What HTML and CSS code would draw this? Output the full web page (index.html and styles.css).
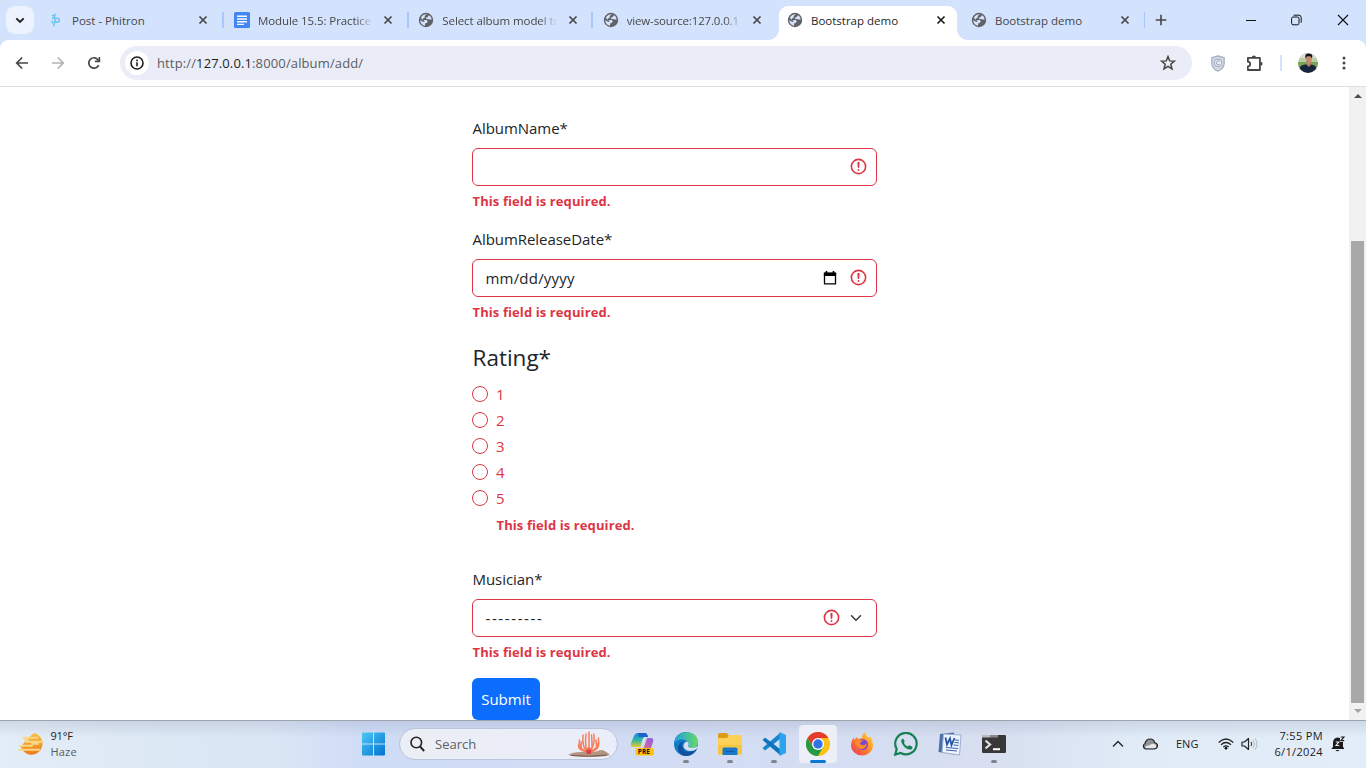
FILE: index.html
```html
<!DOCTYPE html>
<html lang="en">
<head>
<meta charset="utf-8">
<title>Bootstrap demo</title>
<link rel="stylesheet" href="styles.css">
</head>
<body>
<svg width="0" height="0" class="defs">
  <defs>
    <symbol id="globe" viewBox="0 0 16 16"><circle cx="8" cy="8" r="7.2" fill="#5f6368"/><path d="M9 2.3 6.6 4 6.9 5.4 5 6.5 5 8 8.6 8.1 9.8 9.3 8.7 11 7.2 11.2 7 13.7Q2.3 12.8 2.3 8L4.8 9.8 6.3 10 6.4 8.8 3.6 6.8 3 5.3Q5 2.1 9 2.3Z" fill="#d8e4fb"/><path d="M9.5 2.5 10.9 3.2 9.5 5.2 8 5.6 8.3 7 11 7.3 13.6 7.7Q13.5 4 9.5 2.5Z" fill="#d8e4fb"/></symbol>
    <symbol id="close" viewBox="0 0 10 10"><path d="M1.5 1.5 8.5 8.5M8.5 1.5 1.5 8.5" stroke="currentColor" stroke-width="1.7"/></symbol>
    <symbol id="invalid" viewBox="0 0 12 12"><circle cx="6" cy="6" r="4.5" fill="none" stroke="#dc3545"/><path d="M5.8 3.6h.4L6 6.5z" fill="#dc3545" stroke="#dc3545" stroke-linejoin="round"/><circle cx="6" cy="8.2" r=".6" fill="#dc3545"/></symbol>
  </defs>
</svg>

<header class="tabstrip">
  <button class="tab-search"><svg width="10" height="7" viewBox="0 0 10 7"><path d="M1.3 1.3 5 5 8.7 1.3" fill="none" stroke="#1f1f1f" stroke-width="1.9"/></svg></button>
  <div class="tab first">
    <svg class="favicon" viewBox="0 0 16 16"><path d="M3.8 3.6h3.6M7.4 1.8 5.8 6.6M4 6.3h5.5c2.4 0 2.4 3.8 0 3.8H6.3M7.5 7 5.6 14.4M4.4 8.4v3.2" fill="none" stroke="#6cc5ee" stroke-width="1.5"/></svg>
    <span class="title">Post - Phitron</span><svg class="x"><use href="#close"/></svg>
  </div>
  <div class="tab sep">
    <svg class="favicon" viewBox="0 0 16 16"><rect width="16" height="16" rx="1.5" fill="#4285f4"/><path d="M3 4.2h10M3 7h10M3 9.8h10M3 12.4h7" stroke="#fff" stroke-width="1.4"/></svg>
    <span class="title fade">Module 15.5: Practice</span><svg class="x"><use href="#close"/></svg>
  </div>
  <div class="tab sep"><svg class="favicon"><use href="#globe"/></svg><span class="title fade">Select album model to</span><svg class="x"><use href="#close"/></svg></div>
  <div class="tab sep"><svg class="favicon"><use href="#globe"/></svg><span class="title fade source">view-source:127.0.0.1</span><svg class="x"><use href="#close"/></svg></div>
  <div class="tab active"><svg class="favicon"><use href="#globe"/></svg><span class="title">Bootstrap demo</span><svg class="x"><use href="#close"/></svg></div>
  <div class="tab"><svg class="favicon"><use href="#globe"/></svg><span class="title">Bootstrap demo</span><svg class="x"><use href="#close"/></svg></div>
  <div class="newtab"><svg width="12" height="12" viewBox="0 0 12 12"><path d="M6 .7v10.6M.7 6h10.6" stroke="#444746" stroke-width="1.6"/></svg></div>
  <div class="window-controls">
    <svg width="10" height="12" viewBox="0 0 10 12"><path d="M0 6.5h10" stroke="#111"/></svg>
    <svg width="11" height="12" viewBox="0 0 11 12"><rect x=".6" y="3" width="7.4" height="7.8" rx="1.5" fill="none" stroke="#111"/><path d="M2.6 1.2h5.2q2.4 0 2.4 2.4v5" fill="none" stroke="#111"/></svg>
    <svg width="12" height="12" viewBox="0 0 12 12"><path d="m1 1 10 10M11 1 1 11" stroke="#111" stroke-width="1.1"/></svg>
  </div>
</header>

<nav class="toolbar">
  <svg width="14" height="14" viewBox="0 0 14 14"><path d="M13 7H2M7.2 1.5 1.7 7l5.5 5.5" fill="none" stroke="#444746" stroke-width="1.7"/></svg>
  <svg width="14" height="14" viewBox="0 0 14 14"><path d="M1 7h11M6.8 1.5 12.3 7l-5.5 5.5" fill="none" stroke="#b0b2b4" stroke-width="1.7"/></svg>
  <svg width="14" height="14" viewBox="0 0 14 14"><path d="M11.7 9.2A5.2 5.2 0 1 1 11.2 3.9L12 5" fill="none" stroke="#444746" stroke-width="1.7"/><path d="M12.4.9V5.4H7.9" fill="none" stroke="#444746" stroke-width="1.6"/></svg>
  <div class="omnibox">
    <span class="info"><svg width="14" height="14" viewBox="0 0 14 14"><circle cx="7" cy="7" r="6" fill="none" stroke="#1f1f1f" stroke-width="1.6"/><path d="M7 6.2v4.1M7 3.6v1.6" stroke="#1f1f1f" stroke-width="1.6"/></svg></span>
    <span class="url">http://<b>127.0.0.1</b>:8000/album/add/</span>
    <svg width="16" height="16" viewBox="0 0 16 16"><path d="m8 1.6 1.7 4.3 4.7.3-3.6 3 1.2 4.6L8 11.3l-4 2.5 1.2-4.6-3.6-3 4.7-.3Z" fill="none" stroke="#444746" stroke-width="1.5"/></svg>
  </div>
  <svg class="shield" width="14" height="17" viewBox="0 0 14 17"><path d="M7 .8 13.2 2.6V8c0 4.2-3 6.8-6.2 8.2C3.8 14.8.8 12.2.8 8V2.6Z" fill="#d4d9e5" stroke="#a4adc1" stroke-width="1.2"/><circle cx="7" cy="7.8" r="3.8" fill="#e9ecf2" stroke="#9fa9c0"/><path d="M8.6 6.3a2 2 0 1 0 0 3" fill="none" stroke="#98a3bc"/></svg>
  <svg class="puzzle" width="17" height="17" viewBox="0 0 17 17"><path d="M1.9 2.9H13.9V15H1.9V11.5C4.9 11.5 4.9 6.7 1.9 6.7Z" fill="none" stroke="#444746" stroke-width="1.8" stroke-linejoin="round"/><path d="M5.8 2.6a2.1 2.1 0 0 1 4.2 0ZM14.5 6.7a2.1 2.1 0 0 1 0 4.2Z" fill="#444746"/></svg>
  <i class="divider"></i>
  <svg class="avatar" width="20" height="20" viewBox="0 0 20 20"><clipPath id="av"><circle cx="10" cy="10" r="10"/></clipPath><g clip-path="url(#av)"><path fill="#b9cda4" d="M0 0h20v20H0z"/><path fill="#ddd9d0" d="M0 0h20v5H0z"/><path fill="#78a255" d="M0 9h20v5H0z"/><path fill="#17263b" d="M1 20v-4q1-4 6-4.5h6q5 .5 6 4.5v4z"/><path fill="#b98168" d="M8.8 9h4v3l-2 2-2-2z"/><ellipse cx="10.8" cy="6.5" rx="2.9" ry="4.3" fill="#c28b6e"/><path fill="#141414" d="M7.6 5.5C6.5 1 9 .2 11.5.6s3.5 2 2.4 4.9L12.5 3.2 9 3.3Z"/></g></svg>
  <svg class="menu" width="4" height="14" viewBox="0 0 4 14" fill="#444746"><circle cx="2" cy="2" r="1.5"/><circle cx="2" cy="7" r="1.5"/><circle cx="2" cy="12" r="1.5"/></svg>
</nav>

<div class="viewport">
  <main class="page">
    <form class="album-form">
      <div class="field">
        <label>AlbumName*</label>
        <div class="control"><svg class="invalid"><use href="#invalid"/></svg></div>
        <p class="error">This field is required.</p>
      </div>
      <div class="field">
        <label>AlbumReleaseDate*</label>
        <div class="control"><span class="date">mm/dd/yyyy</span>
          <svg class="calendar" viewBox="0 0 14 14"><path d="M1.5 2.5h11v10.3h-11z" fill="none" stroke="#000" stroke-width="1.3"/><path d="M.9 1.6h12.2V5H.9zM2.7 0h1.6v2H2.7zM9.7 0h1.6v2H9.7z"/></svg>
          <svg class="invalid"><use href="#invalid"/></svg></div>
        <p class="error">This field is required.</p>
      </div>
      <fieldset class="field rating">
        <div class="legend">Rating*</div>
        <div class="check"><i></i><span>1</span></div>
        <div class="check"><i></i><span>2</span></div>
        <div class="check"><i></i><span>3</span></div>
        <div class="check"><i></i><span>4</span></div>
        <div class="check"><i></i><span>5</span></div>
        <p class="error">This field is required.</p>
      </fieldset>
      <div class="field">
        <label>Musician*</label>
        <div class="control"><span class="dashes">---------</span><svg class="invalid"><use href="#invalid"/></svg>
          <svg class="chevron" viewBox="0 0 16 16"><path d="m2 5 6 6 6-6" fill="none" stroke="#343a40" stroke-width="2" stroke-linecap="round" stroke-linejoin="round"/></svg></div>
        <p class="error">This field is required.</p>
      </div>
      <button type="button" class="submit">Submit</button>
    </form>
  </main>
  <aside class="scrollbar"><i class="up"></i><i class="thumb"></i><i class="down"></i></aside>
</div>

<footer class="taskbar">
  <div class="weather">
    <svg width="26" height="24" viewBox="0 0 26 24"><defs><linearGradient id="sun" x2="0" y2="1"><stop stop-color="#f9bd3d"/><stop offset="1" stop-color="#ed7d1c"/></linearGradient></defs><path d="M16 1a11 11 0 1 1-13 14L9 7Z" fill="url(#sun)"/><path d="M5.5 5.7h14M8 9.7h16M2 13.7h12M1 17.7h20M7 7.7h3M14 11.7h6" stroke="#f6d887" stroke-width="2" stroke-linecap="round"/></svg>
    <div><div class="temp">91°F</div><div class="haze">Haze</div></div>
  </div>
  <div class="apps">
    <svg class="start" width="24" height="24" viewBox="0 0 24 24"><defs><linearGradient id="win" x2="1" y2="1"><stop stop-color="#4cc9f5"/><stop offset="1" stop-color="#0072d2"/></linearGradient></defs><path fill="url(#win)" d="M1 1.5Q1 .5 2 .5H12V11.5H1ZM13 .5H23Q24 .5 24 1.5V11.5H13ZM1 12.5H12V23.5H2Q1 23.5 1 22.5ZM13 12.5H24V22.5Q24 23.5 23 23.5H13Z"/></svg>
    <div class="search">
      <svg width="15" height="16" viewBox="0 0 15 16"><circle cx="6.3" cy="6.5" r="5.3" fill="none" stroke="#222" stroke-width="1.6"/><path d="m10 10.5 4.2 4.5" stroke="#222" stroke-width="1.9"/></svg>
      <span>Search</span>
      <svg class="coral" width="42" height="26" viewBox="0 0 42 26"><g fill="none" stroke="#f8805c" stroke-width="1.5" stroke-linecap="round"><path d="M21 22V1M20 21Q14 18 15 4M22 20Q27 15 26 3M20 21Q10 19 11.5 9M22 21Q32 17 30.5 7M18 18Q17 10 18 3M24 18Q24 9 23.5 4M19 21Q10 19 10.5 14M23 21Q31 19 31 12M13 17 13.5 11M28.5 16 28 9"/></g><path d="M17.5 20q3.5-8 7 0v3h-7Z" fill="#f06c54"/><path d="M0 24q5-3.5 16-3t15-1.5 11 4.5q-7 2-20 2T0 24Z" fill="#b69583"/><path d="M3 24.5q20 1.5 36-.5" stroke="#76584e" fill="none"/><path d="M18.5 19h4.5v4h-4.5z" fill="#df3f48"/></svg>
    </div>
    <div class="app"><svg width="24" height="24" viewBox="0 0 24 24"><defs><linearGradient id="cp" x2="0" y2="1"><stop stop-color="#1988e4"/><stop offset=".5" stop-color="#2cb6a4"/><stop offset="1" stop-color="#e9cb2e"/></linearGradient><linearGradient id="cp2" x1="1" x2="0" y2="1"><stop stop-color="#8d60e8"/><stop offset="1" stop-color="#f46778"/></linearGradient></defs><path d="M8 1h7q2 0 3 4h-3q-2 0-3 4L10.5 15H3q-3 0-2-4L4 4Q5 1 8 1Z" fill="url(#cp)"/><path d="M17 6h4q3 0 2 4l-2 6q-1 3-4 3h-6q2-1 3-4Z" fill="url(#cp2)"/><path d="M8 1h7q2 0 3 4H9Z" fill="#1764c8"/><rect x="5.5" y="16" width="18.5" height="7.5" rx="2" fill="#ffc20e"/><text x="7.8" y="22.3" class="pre">PRE</text></svg></div>
    <div class="app run"><svg width="24" height="24" viewBox="0 0 24 24"><defs><linearGradient id="eg" x2="1"><stop stop-color="#239ce4"/><stop offset="1" stop-color="#67da65"/></linearGradient></defs><circle cx="12" cy="12" r="12" fill="#107ac9"/><path d="M0 11Q2 0 12.5 0 24 1 24 10q0 6-6 6-4 0-4-2 2-2 0-4Q8 4 0 11Z" fill="url(#eg)"/><path d="M8 13q0 7 7 7 4 0 8-3-4 7-11 7-7-1-8-7 0-5 5-8-1 2-1 4Z" fill="#124f9e"/><path d="M13 9.5q-4 1-3.5 5.5 2 4 7 4 4 0 6.5-2.5l1-2.5q-3 2-6 2-4 0-4-2.5 2-2-1-4Z" fill="#d7dff2"/></svg></div>
    <div class="app run"><svg width="24" height="24" viewBox="0 0 24 24"><path d="M0 3q0-2 2-2h7l2 3v5H0Z" fill="#dc9c13"/><path d="M0 6h9l2-3h13v19q0 1-1 1H1q-1 0-1-1Z" fill="#fbd158"/><path d="M0 13h24v9H0Z" fill="#f8c541"/><path d="M4.5 23v-6q0-1.5 1.5-1.5h12q1.5 0 1.5 1.5v6Z" fill="#1878ca"/><path d="M8 19.5h8" stroke="#0e5da5"/></svg></div>
    <div class="app run"><svg width="24" height="24" viewBox="0 0 24 24"><path d="M18 1 .5 16 3 18.5 18 7Z" fill="#1585cf"/><path d="M.5 8 3 5.5 18 17v6Z" fill="#0d75bd"/><path d="m17.5 0 6.5 3v18l-6.5 3Z" fill="#2ca3ed"/></svg></div>
    <div class="app run current"><svg width="24" height="24" viewBox="0 0 24 24"><circle cx="12" cy="12" r="12" fill="#fbc116"/><path d="M1.6 6a12 12 0 0 1 20.8 0H12L7 15Z" fill="#e33b2e"/><path d="M1.6 6A12 12 0 0 0 12 24l5.2-9L7 15Z" fill="#249a49"/><circle cx="12" cy="12" r="6" fill="#fff"/><circle cx="12" cy="12" r="4.7" fill="#2e74e6"/></svg></div>
    <div class="app"><svg width="24" height="24" viewBox="0 0 24 24"><defs><linearGradient id="ff" x1="1" x2="0" y2="1"><stop stop-color="#ffe33d"/><stop offset=".5" stop-color="#ff8425"/><stop offset="1" stop-color="#f12e65"/></linearGradient></defs><path d="M15 0q1 4 4 6l1-2q3 4 3 9a11 10.5 0 0 1-22 0q0-4 3-8v3l3-3 1 2q2-1 4-1 0-4 3-6Z" fill="url(#ff)"/><circle cx="12.5" cy="12.5" r="5.5" fill="#8247cf"/><path d="M5 9q5-2 9 0-4 0-4 3 4 3 7-1-1 7-7 6-4-2-5-8Z" fill="#ff8928"/></svg></div>
    <div class="app"><svg width="26" height="24" viewBox="0 0 26 24"><path d="M3.7 17A10.7 10.7 0 1 1 7.8 21L2.2 22.6Z" fill="none" stroke="#168052" stroke-width="2.2"/><path d="M10 6.5q-3 1-1 5 3 6 8.5 6 3-.5 1.5-3l-2.7-1.3-1.6 1.3q-3-1-3.8-3.7L11.8 9.2Z" fill="#168052"/></svg></div>
    <div class="app"><svg width="24" height="24" viewBox="0 0 24 24"><path d="M2 2 16 .5v22L.5 20Z" fill="#4a70ab"/><path d="m5.5 2 17.5 1-1.5 20-17.5-2.5Z" fill="#eef4ff" stroke="#9faed0"/><path d="m7.5 5.5 1.5 7 3-6 1.5 6.5 3-7" fill="none" stroke="#2454a5" stroke-width="1.8"/><path d="m17 8 4 .3M16.5 10.5l4.5.3M15.5 13l5 .4M8 15.5l12 1M8 18l11 1" stroke="#3a63a9"/></svg></div>
    <div class="app run"><svg width="24" height="20" viewBox="0 0 24 20"><rect y="1" width="24" height="18" rx="1.2" fill="#383838"/><path d="M0 3.5V2q0-1 1-1h7v2.5Z" fill="#bbb"/><path d="M8 1h8v2.5H8Z" fill="#888"/><path d="m3.5 6.5 4.5 4-4.5 4" fill="none" stroke="#ddd" stroke-width="2.3"/><path d="M11 15.2h7" stroke="#fff" stroke-width="2"/></svg></div>
  </div>
  <div class="tray">
    <svg width="12" height="8" viewBox="0 0 12 8"><path d="m1 6.5 5-5 5 5" fill="none" stroke="#222" stroke-width="1.3"/></svg>
    <svg class="cloud" width="16" height="12" viewBox="0 0 16 12"><path d="M3.5 11a3 3 0 0 1-.5-5.5Q4 1 8 1T12.5 4.5q3 .5 3 3.3t-3 3.2Z" fill="#8f9296"/><path d="M3 10.3q1-3 4.5-3 2-2.3 4.5-1.3 3 1 2 3.5-.5 1.1-3 1.1Z" fill="#e8e8e8"/><path d="M3.5 11a3 3 0 0 1-.5-5.5Q4 1 8 1T12.5 4.5q3 .5 3 3.3t-3 3.2Z" fill="none" stroke="#222" stroke-width="1.2"/></svg>
    <span class="lang">ENG</span>
    <svg class="wifi" width="16" height="12" viewBox="0 0 16 12"><g fill="none" stroke="#222" stroke-width="1.2"><path d="M.7 4.5q7.3-7 14.6 0M3 6.8q5-4.6 10 0M5.3 9q2.7-2.4 5.4 0"/></g><circle cx="8" cy="10.3" r="1.3"/></svg>
    <svg class="sound" width="17" height="14" viewBox="0 0 17 14"><path d="M1 5h2.5L7.5 1.5v11L3.5 9H1Z" fill="none" stroke="#222" stroke-width="1.2" stroke-linejoin="round"/><path d="M10 4.8q1.5 2.2 0 4.4" fill="none" stroke="#333"/><path d="M12 3q3 4 0 8M14 1.5q4 5.5 0 11" fill="none" stroke="#b3bac2"/></svg>
    <div class="clock"><div>7:55 PM</div><div>6/1/2024</div></div>
    <svg class="bell" width="14" height="16" viewBox="0 0 14 16"><path d="M1 11.5h1V7q0-5 4.5-5.5L9 2v4h3v5.5h1V13H.5Z" fill="#1c1c1c"/><path d="M4.5 14h4q-2 2.5-4 0Z" fill="#1c1c1c"/><path d="M9.8 1h3.2L10 4.6h3.2" fill="none" stroke="#1c1c1c" stroke-width="1.2"/><path d="M4.8 6h3L5 9.5h3.2" fill="none" stroke="#eee" stroke-width="1.1"/></svg>
  </div>
</footer>
</body>
</html>
```
FILE: styles.css
```css
* { box-sizing: border-box; }
body { margin: 0; width: 1366px; height: 768px; overflow: hidden; display: flex; flex-direction: column; background: #fff; font-family: "Open Sans", "Noto Sans", sans-serif; color: #212529; }
svg { display: block; flex: none; }
.defs { position: absolute; }

.tabstrip { height: 40px; flex: none; background: #d3e2fd; display: flex; padding-left: 6px; }
.tab-search { width: 28px; height: 28px; margin: 6px 4px 0 0; padding: 0; border: 0; border-radius: 9px; background: #ecf3fe; display: flex; align-items: center; justify-content: center; }
.tab { width: 184.4px; flex: none; display: flex; align-items: center; padding-left: 11px; color: #474747; }
.tab.first { padding-left: 10px; }
.first .x { margin-left: 12px; }
.tab.sep { background: linear-gradient(#a8c7fa, #a8c7fa) -1px 12px / 2px 16px no-repeat; border-left: 1px solid transparent; padding-left: 10.5px; background-origin: border-box; }
.tab.sep { background-position: 0 12px; }
.favicon { width: 16px; height: 16px; }
.title { width: 114px; margin-left: 8px; font-size: 11.5px; white-space: nowrap; }
.fade { width: 119px; margin-right: -5px; letter-spacing: -.08px; -webkit-mask-image: linear-gradient(90deg, #000 82%, transparent 97%); }
.source { letter-spacing: -.15px; }
.x { width: 10px; height: 10px; margin-left: 11.5px; }
.active { position: relative; background: #fff; border-radius: 9px 9px 0 0; width: 178px; height: 34px; margin: 6px 3px 0 3.4px; padding-left: 8px; color: #1f1f1f; padding-bottom: 6px; }
.active::before, .active::after { content: ""; position: absolute; bottom: 0; width: 10px; height: 10px; background: radial-gradient(circle at 0 0, transparent 9.5px, #fff 10px); left: -10px; }
.active::after { left: auto; right: -10px; background: radial-gradient(circle at 100% 0, transparent 9.5px, #fff 10px); }
.newtab { width: 36px; display: flex; align-items: center; padding-left: 11px; background: linear-gradient(#a8c7fa, #a8c7fa) -1px 12px / 2px 16px no-repeat; }
.window-controls { margin-left: auto; display: flex; align-items: center; gap: 35px; padding-right: 17px; }

.toolbar { height: 47px; flex: none; background: radial-gradient(circle at 100% 100%, #fff 7.5px, #d3e2fd 8px) 0 0 / 8px 8px no-repeat, radial-gradient(circle at 0 100%, #fff 7.5px, #d3e2fd 8px) 100% 0 / 8px 8px no-repeat, #fff; border-bottom: 1px solid #dedfe1; display: flex; align-items: center; padding-left: 15px; gap: 22px; }
.omnibox { width: 1072px; height: 34px; margin-left: -3px; border-radius: 17px; background: #eaedf7; display: flex; align-items: center; padding: 0 16px 0 5px; }
.info { width: 24px; height: 24px; border-radius: 50%; background: #fff; display: grid; place-items: center; }
.url { margin-left: 8px; margin-right: auto; font-size: 13px; letter-spacing: .13px; color: #5a5d61; }
.url b { font-weight: 400; color: #1f1f1f; }
.shield { margin-left: -3px; }
.puzzle { margin-left: -1px; }
.divider { width: 2px; height: 16px; background: #d3e2fd; margin-left: -5px; }
.avatar { margin-left: -6px; }
.menu { margin-left: 2px; }

.viewport { height: 633px; flex: none; display: flex; background: #fff; }
.page { flex: 1; overflow: hidden; padding: 29px 0 0 472px; }
.album-form { width: 405px; }
.field { margin: 0 0 16px; padding: 0; border: 0; }
label { display: block; font-size: 15px; line-height: 24px; margin-bottom: 8px; padding-left: .5px; letter-spacing: -.05px; }
.control { height: 38px; border: 1px solid #dc3545; border-radius: 6px; display: flex; align-items: center; justify-content: flex-end; padding: 0 8.5px 1px 12.5px; font-size: 15px; }
.control span { margin-right: auto; }
.date { letter-spacing: .2px; }
.dashes { letter-spacing: 1.6px; }
.invalid { width: 19px; height: 19px; }
.calendar { width: 14px; height: 14px; margin-right: 11.5px; }
.chevron { width: 12px; height: 12px; margin: 0 5.5px 0 9.5px; }
.error { margin: 5px 0 0; padding-left: .5px; font-size: 13px; line-height: 20px; letter-spacing: .1px; font-weight: 700; color: #dc3545; }
.legend { font-size: 22.5px; line-height: 36px; margin: 2px 0 6px; padding-left: .5px; }
.check { height: 24px; margin-bottom: 2px; display: flex; align-items: center; gap: 8px; color: #dc3545; font-size: 15px; }
.check i { width: 16px; height: 16px; border: 1px solid #dc3545; border-radius: 50%; }
.rating .error { margin: 5px 0 0 24px; }
.rating { margin-bottom: 32px; }
.submit { display: block; width: 68px; height: 42px; border: 0; border-radius: 6px; padding: 0; background: #0d6efd; color: #fff; font: 15px "Open Sans", sans-serif; }

.scrollbar { width: 17px; background: #f1f1f1; display: flex; flex-direction: column; align-items: center; }
.up, .down { border: 4px solid transparent; border-top: 0; border-bottom: 4px solid #505050; margin-top: 7px; }
.thumb { width: 13px; height: 462px; background: #a8a8a8; margin-top: 143px; }
.down { border-bottom: 0; border-top: 4px solid #a3a3a3; margin-top: 6px; }

.taskbar { height: 48px; flex: none; border-top: 1px solid #9ea4ae; padding-bottom: 2px; background: linear-gradient(rgba(125,135,165,.2), transparent 35%), linear-gradient(90deg, #e3edf7, #dce8f4 12%, #dbe6f5 20%, #cfdcf6 27%, #d3ddf3 55%, #d7dff0 72%, #e0ebf7 83%, #e2edf8); display: flex; align-items: center; }
.weather { width: 361px; padding-left: 18px; display: flex; align-items: center; gap: 6.5px; font-size: 11px; line-height: 16px; color: #222; }
.temp { letter-spacing: -.2px; }
.haze { color: #555b61; letter-spacing: .2px; }
.apps { display: flex; align-items: center; }
.search { width: 219px; height: 32px; border-radius: 16px; border: 1px solid #bac5db; background: linear-gradient(90deg, #eceef5, #eaeefa); margin: 0 2px 0 14px; display: flex; align-items: center; padding: 0 7px 0 10px; font-size: 13px; color: #5d5f63; }
.search span { margin-left: 10px; margin-right: auto; }
.app { width: 38px; height: 38px; margin: 0 3px; display: flex; flex-direction: column; align-items: center; justify-content: center; border-radius: 4px; position: relative; }
.run::after { content: ""; position: absolute; bottom: 0; width: 6px; height: 3px; border-radius: 2px; background: #7e858f; }
.current { background: #eceff8; }
.current::after { width: 16px; background: #0878d4; }
.pre { font: 700 6.5px "Open Sans", sans-serif; fill: #111; }
.tray { margin-left: auto; display: flex; align-items: center; padding-right: 21px; font-size: 11px; color: #1c1c1c; }
.cloud { margin-left: 18px; }
.lang { width: 25px; margin-left: 18px; }
.wifi { margin-left: 17px; }
.sound { margin-left: 7px; }
.clock { width: 65px; margin-right: -1px; text-align: right; line-height: 16px; letter-spacing: .35px; }
.bell { margin-left: 9px; }
```
